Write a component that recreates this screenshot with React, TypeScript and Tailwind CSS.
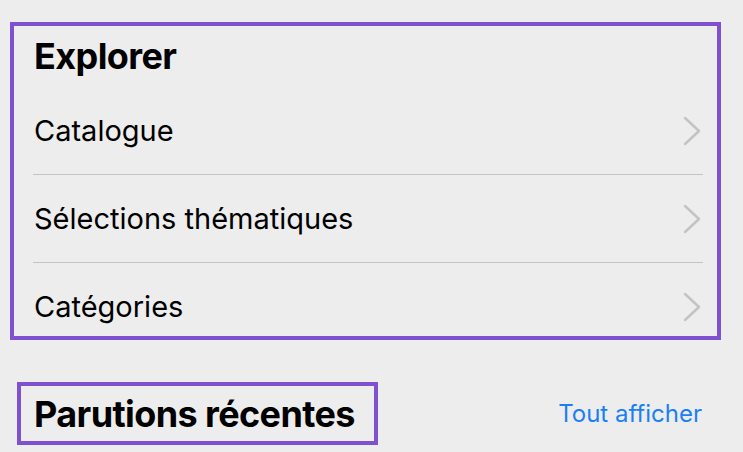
const rows = ["Catalogue", "Sélections thématiques", "Catégories"];

function Chevron() {
  return (
    <svg width="18" height="30" viewBox="0 0 18 30" fill="none" className="shrink-0 mr-[2px]">
      <polyline
        points="2,2 16,15 2,28"
        stroke="#c3c3c5"
        strokeWidth="2.4"
        strokeLinecap="round"
        strokeLinejoin="round"
      />
    </svg>
  );
}

export default function App() {
  return (
    <div className="w-[743px] h-[452px] overflow-hidden bg-[#ededed] font-['Inter',sans-serif] text-black">
      {/* Explorer section */}
      <div className="ml-[10px] mt-[22px] w-[711px] h-[318px] border-4 border-[#7f51d1] overflow-hidden">
        <div className="h-[61px] pl-[20px] pt-[10px]">
          <h2 className="text-[36px] font-bold leading-[40px] tracking-[-0.6px]">Explorer</h2>
        </div>
        {rows.map((label, i) => (
          <div key={label} className="ml-[19px] mr-[14px]">
            {i > 0 && <div className="h-px bg-[#c4c4c6]" />}
            <div className="h-[87px] flex items-center justify-between pl-px">
              <span className="text-[29px] leading-none">{label}</span>
              <Chevron />
            </div>
          </div>
        ))}
      </div>

      {/* Parutions récentes header */}
      <div className="mt-[42px] flex items-center justify-between pr-[41px]">
        <div className="ml-[17px] w-[361px] h-[63px] border-4 border-[#7f51d1] flex items-center pl-[13px]">
          <h2 className="text-[36px] font-bold leading-none tracking-[-0.6px]">Parutions récentes</h2>
        </div>
        <a className="text-[24px] text-[#1a80f5] leading-none">Tout afficher</a>
      </div>
    </div>
  );
}
